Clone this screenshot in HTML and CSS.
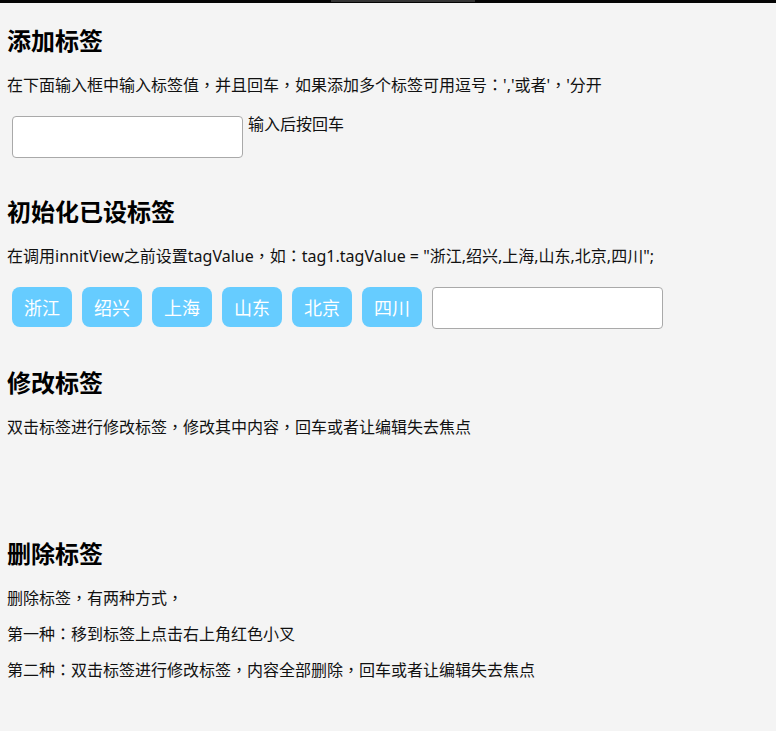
FILE: index.html
```html
<!DOCTYPE html>
<html lang="zh-CN">
<head>
<meta charset="utf-8">
<title>标签</title>
<link rel="stylesheet" href="styles.css">
</head>
<body>
<div class="topbar"><div class="topbar-thumb"></div></div>
<div class="page">
  <h2 class="title first">添加标签</h2>
  <p class="text">在下面输入框中输入标签值<span class="pu">，</span>并且回车<span class="pu">，</span>如果添加多个标签可用逗号<span class="pu">：</span>','或者'<span class="pu">，</span>'分开</p>
  <div class="tagbox">
    <input class="tag-input" type="text">
    <span class="hint">输入后按回车</span>
  </div>

  <h2 class="title">初始化已设标签</h2>
  <p class="text">在调用innitView之前设置tagValue<span class="pu">，</span>如<span class="pu">：</span>tag1.tagValue = "浙江,绍兴,上海,山东,北京,四川";</p>
  <div class="tagbox">
    <span class="tag">浙江</span>
    <span class="tag">绍兴</span>
    <span class="tag">上海</span>
    <span class="tag">山东</span>
    <span class="tag">北京</span>
    <span class="tag">四川</span>
    <input class="tag-input" type="text">
  </div>

  <h2 class="title">修改标签</h2>
  <p class="text">双击标签进行修改标签<span class="pu">，</span>修改其中内容<span class="pu">，</span>回车或者让编辑失去焦点</p>
  <div class="tagbox"></div>

  <h2 class="title">删除标签</h2>
  <p class="text">删除标签<span class="pu">，</span>有两种方式<span class="pu">，</span></p>
  <p class="text">第一种<span class="pu">：</span>移到标签上点击右上角红色小叉</p>
  <p class="text">第二种<span class="pu">：</span>双击标签进行修改标签<span class="pu">，</span>内容全部删除<span class="pu">，</span>回车或者让编辑失去焦点</p>
</div>
</body>
</html>
```
FILE: styles.css
```css
html, body {
  margin: 0;
  padding: 0;
  background: #f4f4f4;
}
body {
  font-family: "Noto Sans CJK SC", sans-serif;
  color: #111;
}
.topbar {
  height: 3px;
  background: #050505;
}
.topbar-thumb {
  margin-left: 331px;
  width: 144px;
  height: 2px;
  background: #353535;
}
.page {
  padding: 0 7px 20px;
}
.title {
  font-size: 24px;
  line-height: 32px;
  font-weight: bold;
  color: #000;
  margin: 20px 0 19px;
}
.title.first {
  margin-top: 21px;
}
.text {
  font-family: "Noto Sans", "Noto Sans CJK SC", sans-serif;
  font-size: 16px;
  line-height: 20px;
  margin: 16px 0;
}
.pu {
  font-family: "Noto Sans CJK TC", sans-serif;
  font-feature-settings: "locl" 0;
  line-height: 0;
}
.tagbox {
  display: flex;
  flex-wrap: wrap;
  align-items: flex-start;
  min-height: 52px;
  padding-bottom: 12px;
}
.tag-input {
  box-sizing: border-box;
  width: 231px;
  height: 42px;
  margin: 5px;
  border: 1px solid #a9a9a9;
  border-radius: 4px;
  background: #fff;
  padding: 0 6px;
  font-size: 16px;
  outline: none;
}
.hint {
  font-size: 16px;
  line-height: 20px;
  padding-top: 2px;
}
.tag {
  box-sizing: border-box;
  width: 60px;
  height: 40px;
  margin: 5px;
  border-radius: 8px;
  background: #66ccff;
  color: #fff;
  font-size: 18px;
  line-height: 40px;
  text-align: center;
}
```
